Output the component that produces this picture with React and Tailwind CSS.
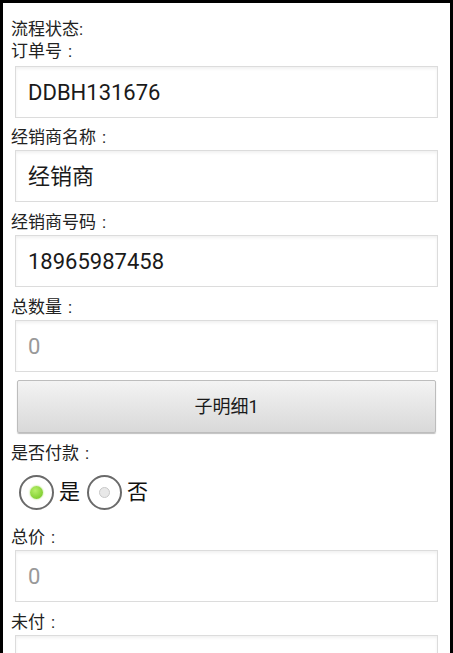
import React, { useState } from "react";

const font = { fontFamily: '"Roboto", "Noto Sans CJK SC", sans-serif' };

// Android-style label with the spaced full-width colon
const Label = ({ text, colon = true, className = "" }) => (
  <div className={`text-[17px] leading-[22px] text-[#222] ${className}`}>
    {text}
    {colon && <span className="ml-[6px]">:</span>}
  </div>
);

const Box = ({ value, muted, className = "" }) => (
  <div
    className={`mx-[4px] h-[52px] flex items-center pl-[12px] bg-white border border-[#dcdcdc] shadow-[inset_0_2px_3px_rgba(0,0,0,0.06)] text-[22px] ${
      muted ? "text-[#999]" : "text-[#1a1a1a]"
    } ${className}`}
  >
    {value}
  </div>
);

const Radio = ({ checked, label, onClick }) => (
  <button className="flex items-center" onClick={onClick}>
    <span className="w-[35px] h-[35px] rounded-full border-2 border-[#6a6a6a] bg-white flex items-center justify-center">
      {checked ? (
        <span className="w-[13px] h-[13px] rounded-full bg-[radial-gradient(circle_at_40%_35%,#b8f06a,#6cc21c)] shadow-[0_0_2px_#9bd94f]" />
      ) : (
        <span className="w-[11px] h-[11px] rounded-full bg-[#e8e8e8] border border-[#c8c8c8]" />
      )}
    </span>
    <span className="ml-[5px] text-[21px] leading-none text-[#111]">{label}</span>
  </button>
);

const App = () => {
  const [paid, setPaid] = useState(true);

  return (
    <div
      className="w-[453px] h-[653px] overflow-hidden bg-white border-t-[3px] border-x-[3px] border-black px-[8px] pt-[15px]"
      style={font}
    >
      <div className="text-[17px] leading-[22px] text-[#222]">流程状态:</div>
      <Label text="订单号" />
      <Box value="DDBH131676" className="mt-[4px]" />

      <Label text="经销商名称" className="mt-[8px]" />
      <Box value="经销商" className="mt-[2px]" />

      <Label text="经销商号码" className="mt-[9px]" />
      <Box value="18965987458" className="mt-[2px]" />

      <Label text="总数量" className="mt-[9px]" />
      <Box value="0" muted className="mt-[2px]" />

      <button className="mt-[8px] mx-[6px] w-[419px] h-[53px] flex items-center justify-center border border-[#bdbdbd] rounded-[2px] bg-gradient-to-b from-[#f3f3f3] to-[#d9d9d9] shadow-[0_1px_1px_rgba(0,0,0,0.25)] text-[18px] text-[#1a1a1a]">
        子明细1
      </button>

      <Label text="是否付款" className="mt-[9px]" />
      <div className="mt-[11px] ml-[8px] flex items-center gap-[7px]">
        <Radio checked={paid} label="是" onClick={() => setPaid(true)} />
        <Radio checked={!paid} label="否" onClick={() => setPaid(false)} />
      </div>

      <Label text="总价" className="mt-[16px]" />
      <Box value="0" muted className="mt-[2px]" />

      <Label text="未付" className="mt-[9px]" />
      <Box value="" className="mt-[2px]" />
    </div>
  );
};

export default App;
